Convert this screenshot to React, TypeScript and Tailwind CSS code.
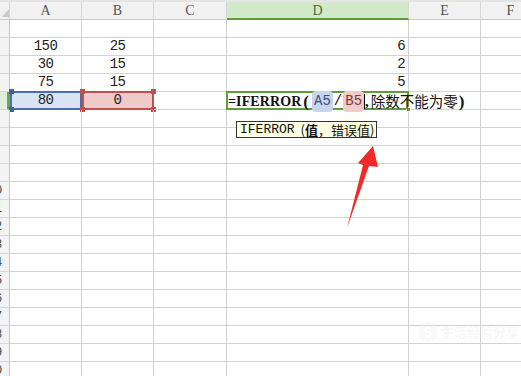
import React from "react";

const cols = [
  { key: "A", w: "w-[72px]" },
  { key: "B", w: "w-[72px]" },
  { key: "C", w: "w-[73px]" },
  { key: "D", w: "w-[182px]" },
  { key: "E", w: "w-[72px]" },
  { key: "F", w: "w-[60px]" },
];

const data: Record<number, { A?: string; B?: string; D?: string }> = {
  2: { A: "150", B: "25", D: "6" },
  3: { A: "30", B: "15", D: "2" },
  4: { A: "75", B: "15", D: "5" },
};

const MONO = "font-['Liberation_Mono','DejaVu_Sans_Mono',monospace]";
const CJK = "font-['Noto_Sans_CJK_SC','Noto_Sans',sans-serif]";
const SERIF = "font-['Liberation_Serif','DejaVu_Serif',serif]";

function Corner({ cls, color }: { cls: string; color: string }) {
  return <div className={`absolute w-[5px] h-[5px] ${cls} ${color}`} />;
}

export default function App() {
  const rows = Array.from({ length: 20 }, (_, i) => i + 1);
  return (
    <div className="relative w-[521px] h-[376px] overflow-hidden bg-white select-none">
      {/* header */}
      <div className="flex h-[20px] bg-[#f1f1f1] border-b border-[#c8c8c8] border-t-[2px] border-t-[#e4e4e4]">
        <div className="relative w-[10px] shrink-0 border-r border-[#d6d6d6]">
          <svg className="absolute left-[2px] top-[7px]" width="7" height="8" viewBox="0 0 7 8">
            <polygon points="7,0 7,8 0,8" fill="#c9c9c9" />
          </svg>
        </div>
        {cols.map((c) => (
          <div
            key={c.key}
            className={`${c.w} shrink-0 flex items-center justify-center border-r border-[#d6d6d6] text-[14px] ${SERIF} ${
              c.key === "D" ? "bg-[#d3eac9] text-[#4f6a45] border-b-[2px] border-b-[#5e9c3e] -mb-[1px]" : "text-[#555]"
            }`}
          >
            {c.key}
          </div>
        ))}
      </div>

      {/* body */}
      {rows.map((r) => {
        const d = data[r] || {};
        const active = r === 5;
        return (
          <div key={r} className="flex h-[18px]">
            <div
              className={`relative w-[10px] shrink-0 overflow-hidden border-b border-[#d6d6d6] ${
                active ? "bg-[#e1efd9] border-r-[3px] border-r-[#6aa84f]" : "bg-[#f3f3f3] border-r border-r-[#c8c8c8]"
              }`}
            >
              <div className={`absolute left-[-20px] top-0 w-[30px] h-full flex items-center justify-center text-[12px] text-[#444] ${MONO}`}>
                {r}
              </div>
            </div>
            {cols.map((c) => {
              let content: React.ReactNode = null;
              let extra = "";
              if (c.key === "A" && d.A) content = d.A;
              if (c.key === "B" && d.B) content = d.B;
              if (c.key === "D" && d.D) content = d.D;
              const align = c.key === "D" ? "justify-end pr-[3px]" : "justify-center";
              if (active && c.key === "A") {
                extra = "bg-[#dae3f3]";
                content = "80";
              }
              if (active && c.key === "B") {
                extra = "bg-[#f0c9c9]";
                content = "0";
              }
              return (
                <div
                  key={c.key}
                  className={`relative ${c.w} shrink-0 flex items-center ${align} border-r border-b border-[#d2d2d2] text-[14px] tracking-[-0.6px] text-[#222] ${MONO} ${extra}`}
                >
                  {content}
                  {active && c.key === "A" && (
                    <>
                      <div className="absolute left-0 right-[-1px] top-[-1px] bottom-[-1px] border-2 border-[#4a6db0]" />
                      <Corner cls="left-[-1px] top-[-3px]" color="bg-[#40609e]" />
                      <Corner cls="left-[-1px] bottom-[-3px]" color="bg-[#40609e]" />
                    </>
                  )}
                  {active && c.key === "B" && (
                    <>
                      <div className="absolute left-0 right-[-1px] top-[-1px] bottom-[-1px] border-2 border-[#c0504d]" />
                      <Corner cls="left-[-2px] top-[-3px]" color="bg-[#c0504d]" />
                      <Corner cls="right-[-3px] top-[-3px]" color="bg-[#c0504d]" />
                      <Corner cls="left-[-2px] bottom-[-3px]" color="bg-[#c0504d]" />
                      <Corner cls="right-[-3px] bottom-[-3px]" color="bg-[#c0504d]" />
                    </>
                  )}
                  {active && c.key === "D" && (
                    <>
                      <div className="absolute left-[-1px] right-[-1px] top-[-1px] bottom-[-1px] border-2 border-[#5e9c3e] z-10" />
                      <div className="absolute right-[-3px] bottom-[-3px] w-[5px] h-[5px] bg-[#5e9c3e] border border-white z-20" />
                      <div className="absolute left-[1px] top-0 h-[18px] flex items-center whitespace-nowrap z-30 tracking-normal text-[#111]">
                        <span className={`font-bold text-[14px] tracking-[0.1px] ${SERIF}`}>=IFERROR</span>
                        <span className={`font-bold text-[17px] ml-[2px] leading-none ${SERIF}`}>(</span>
                        <span className={`ml-[3px] px-[2px] rounded-[4px] bg-[#c7d5ee] text-[#3d4f7a] text-[14px] ${MONO}`}>A5</span>
                        <span className={`mx-[1px] text-[14px] ${MONO}`}>/</span>
                        <span className={`px-[2px] rounded-[4px] bg-[#f2caca] text-[#7a3d3d] text-[14px] ${MONO}`}>B5</span>
                        <span className="w-[1px] h-[15px] bg-black" />
                        <span className={`text-[15px] font-bold leading-none mr-[2px] ${SERIF}`}>,</span>
                        <span className={`text-[14.5px] leading-none ${CJK}`}>除数不能为零</span>
                        <span className={`font-bold text-[17px] ml-[1px] leading-none ${SERIF}`}>)</span>
                      </div>
                      {/* tooltip */}
                      <div className="absolute left-[9px] top-[29px] h-[17px] w-[141px] px-[3px] flex items-center whitespace-nowrap bg-[#ffffe1] border border-[#333] z-30 text-[13px] text-[#111] tracking-normal">
                        <span className={MONO}>IFERROR</span>
                        <span className={`ml-[6px] ${CJK}`}>(</span>
                        <span className={`font-bold ${CJK}`}>值</span>
                        <span className={CJK}>，错误值)</span>
                      </div>
                    </>
                  )}
                </div>
              );
            })}
          </div>
        );
      })}

      {/* watermark */}
      <div className="absolute left-[418px] top-[322px] flex items-center gap-[3px] opacity-30">
        <div className={`w-[20px] h-[20px] rounded-full bg-[#ededed] flex items-center justify-center text-[13px] font-bold text-white ${CJK}`}>
          S
        </div>
        <span className={`text-[13px] font-bold text-[#e8e8e8] ${CJK}`}>生活经验分享</span>
      </div>

      {/* red arrow */}
      <svg className="absolute left-0 top-0 pointer-events-none" width="521" height="376" viewBox="0 0 521 376">
        <polygon points="347,228 363,165 358,163 373,146 378,167 369,166" fill="#f02a2a" />
      </svg>
    </div>
  );
}
